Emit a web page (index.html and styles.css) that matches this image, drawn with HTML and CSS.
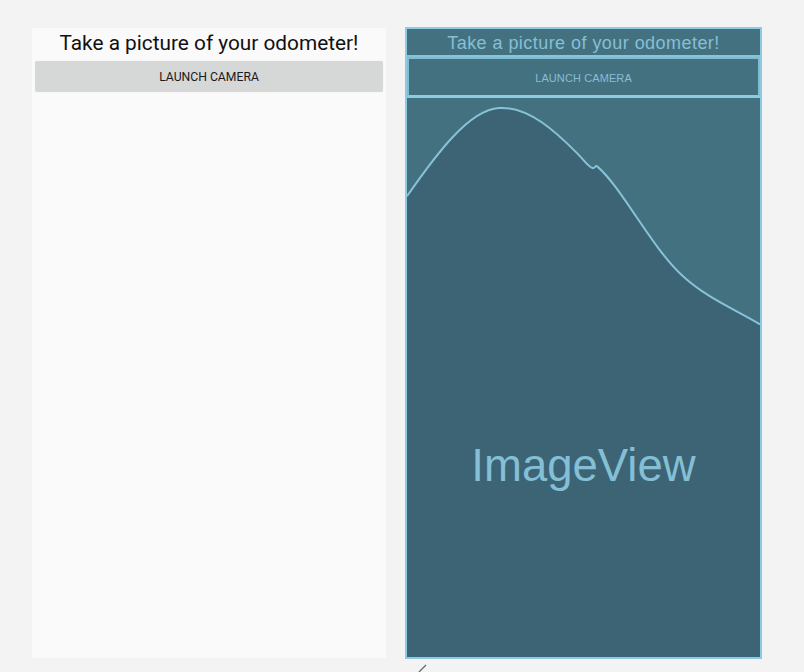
FILE: index.html
```html
<!DOCTYPE html>
<html>
<head>
<meta charset="utf-8">
<link rel="stylesheet" href="styles.css">
</head>
<body>
<div class="stage">
  <div class="phone">
    <div class="title">Take a picture of your odometer!</div>
    <div class="btn">LAUNCH CAMERA</div>
  </div>
  <div class="blueprint">
    <div class="bp-title">Take a picture of your odometer!</div>
    <div class="bp-btn">LAUNCH CAMERA</div>
    <div class="bp-image">
      <svg class="bp-curve" viewBox="0 0 353 558" preserveAspectRatio="none">
        <path d="M0 98 C 30 55, 62 12, 92 10 C 122 8, 150 35, 170 55 C 178 63, 182 70, 186 70 C 189 70, 188 66, 191 69 C 215 90, 245 150, 276 178 C 300 200, 330 212, 353 226 L 353 558 L 0 558 Z" fill="#3c6475"/>
        <path d="M0 98 C 30 55, 62 12, 92 10 C 122 8, 150 35, 170 55 C 178 63, 182 70, 186 70 C 189 70, 188 66, 191 69 C 215 90, 245 150, 276 178 C 300 200, 330 212, 353 226" fill="none" stroke="#86c2d8" stroke-width="2"/>
      </svg>
      <div class="bp-label">ImageView</div>
    </div>
  </div>
</div>
<svg class="handle" width="10" height="10" viewBox="0 0 10 10"><path d="M1 9 L8 2" stroke="#666" stroke-width="1.2"/></svg>
</body>
</html>
```

FILE: styles.css
```css
html, body {
  margin: 0;
  padding: 0;
  background: #f3f3f3;
  width: 804px;
  height: 672px;
  overflow: hidden;
  position: relative;
}
.stage {
  display: flex;
  align-items: flex-start;
  padding: 27px 0 0 32px;
}
.phone {
  margin-top: 1px;
  width: 354px;
  height: 630px;
  background: #fafafa;
  display: flex;
  flex-direction: column;
}
.title {
  height: 33px;
  line-height: 30px;
  text-align: center;
  font-family: Roboto, "Liberation Sans", sans-serif;
  font-size: 20.8px;
  color: #111;
}
.btn {
  margin: 0 3px;
  height: 31px;
  line-height: 33px;
  background: #d6d7d7;
  border-radius: 2px;
  box-shadow: 0 0 1px rgba(0,0,0,0.12);
  text-align: center;
  font-family: Roboto, "Liberation Sans", sans-serif;
  font-size: 12.2px;
  color: #1a1a1a;
}
.blueprint {
  margin-left: 19px;
  width: 353px;
  height: 628px;
  border: 2px solid #8dcbe3;
  background: #44717f;
  display: flex;
  flex-direction: column;
  font-family: "Liberation Sans", Arial, sans-serif;
  color: #84bfd6;
}
.bp-title {
  height: 26px;
  line-height: 29px;
  text-align: center;
  font-size: 18px;
  letter-spacing: 0.45px;
  border-bottom: 2px solid #86c4dc;
}
.bp-btn {
  height: 36px;
  line-height: 38px;
  border: 2px solid #80bdd4;
  border-bottom-color: #8dcbe3;
  text-align: center;
  font-size: 11px;
  letter-spacing: 0.1px;
  color: #84bfd6;
}
.bp-image {
  flex: 1;
  position: relative;
  border-top: 1px solid #8dcbe3;
}
.bp-curve {
  position: absolute;
  left: 0;
  top: 0;
  width: 100%;
  height: 100%;
  display: block;
}
.bp-label {
  position: absolute;
  left: 0;
  right: 0;
  top: 343px;
  text-align: center;
  font-size: 45.5px;
  line-height: 50px;
  color: #84bfd6;
}
.handle {
  position: absolute;
  left: 418px;
  top: 663px;
}
```
